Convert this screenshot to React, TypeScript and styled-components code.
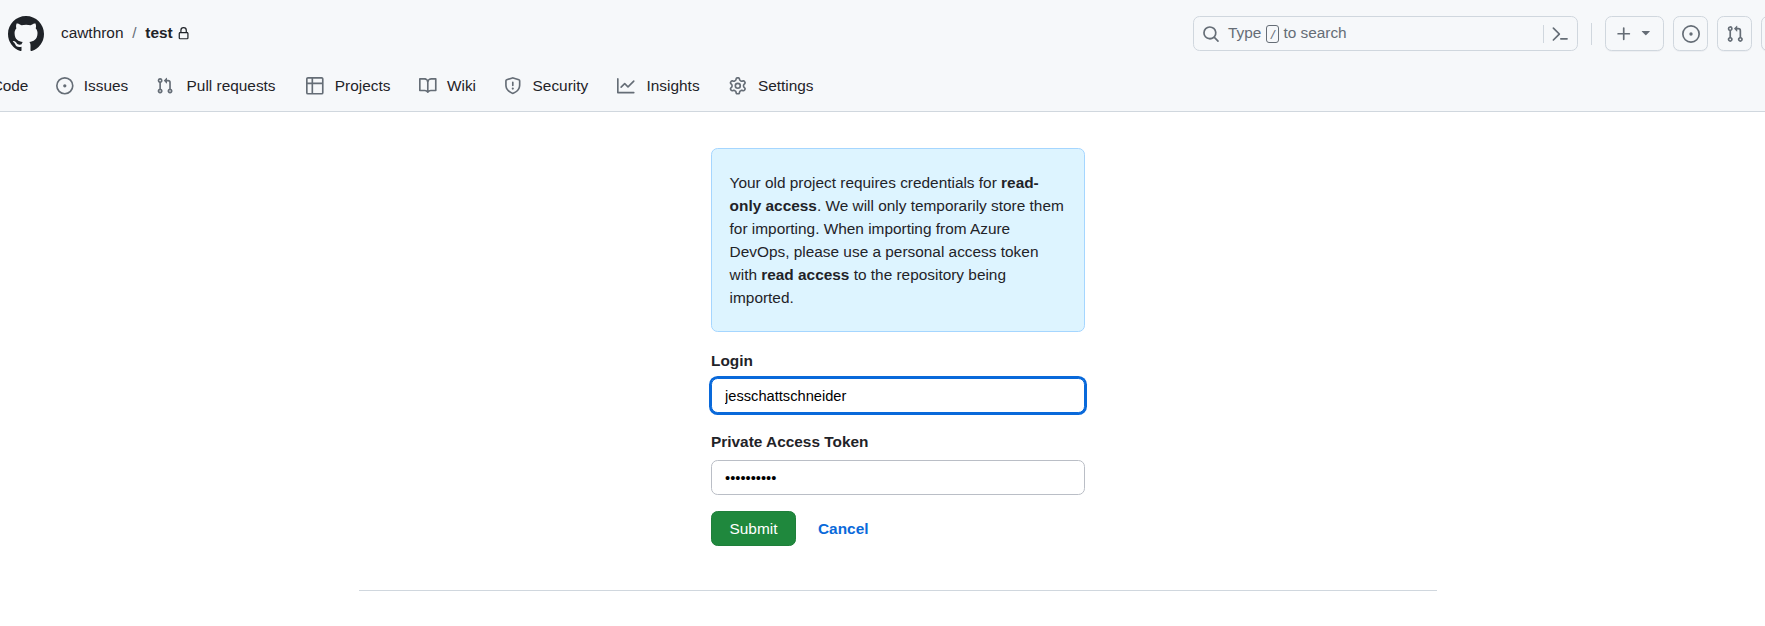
import React from 'react';
import styled, { createGlobalStyle } from 'styled-components';

const Global = createGlobalStyle`
  *, *::before, *::after { box-sizing: border-box; }
  html, body { margin: 0; overflow: hidden; background: #fff; }
  body {
    font-family: "Liberation Sans", Arial, sans-serif;
    font-size: 15.4px;
    line-height: 23.1px;
    color: #1f2328;
  }
`;

const paths = {
  github:
    'M8 0c4.42 0 8 3.58 8 8a8.013 8.013 0 0 1-5.45 7.59c-.4.08-.55-.17-.55-.38 0-.27.01-1.13.01-2.2 0-.75-.25-1.23-.54-1.48 1.78-.2 3.65-.88 3.65-3.95 0-.88-.31-1.59-.82-2.15.08-.2.36-1.02-.08-2.12 0 0-.67-.22-2.2.82-.64-.18-1.32-.27-2-.27-.68 0-1.36.09-2 .27-1.53-1.03-2.2-.82-2.2-.82-.44 1.1-.16 1.92-.08 2.12-.51.56-.82 1.28-.82 2.15 0 3.06 1.86 3.75 3.64 3.95-.23.2-.44.55-.51 1.07-.46.21-1.61.55-2.33-.66-.15-.24-.6-.83-1.23-.82-.67.01-.27.38.01.53.34.19.73.9.82 1.13.16.45.68 1.31 2.69.94 0 .67.01 1.3.01 1.49 0 .21-.15.45-.55.38A7.995 7.995 0 0 1 0 8c0-4.42 3.58-8 8-8Z',
  lock:
    'M4 4a4 4 0 0 1 8 0v2h.25c.966 0 1.75.784 1.75 1.75v5.5A1.75 1.75 0 0 1 12.25 15h-8.5A1.75 1.75 0 0 1 2 13.25v-5.5C2 6.784 2.784 6 3.75 6H4Zm8.25 3.5h-8.5a.25.25 0 0 0-.25.25v5.5c0 .138.112.25.25.25h8.5a.25.25 0 0 0 .25-.25v-5.5a.25.25 0 0 0-.25-.25ZM10.5 6V4a2.5 2.5 0 1 0-5 0v2Z',
  issue:
    'M8 9.5a1.5 1.5 0 1 0 0-3 1.5 1.5 0 0 0 0 3Z M8 0a8 8 0 1 1 0 16A8 8 0 0 1 8 0ZM1.5 8a6.5 6.5 0 1 0 13 0 6.5 6.5 0 0 0-13 0Z',
  pull:
    'M1.5 3.25a2.25 2.25 0 1 1 3 2.122v5.256a2.251 2.251 0 1 1-1.5 0V5.372A2.25 2.25 0 0 1 1.5 3.25Zm5.677-.177L9.573.677A.25.25 0 0 1 10 .854V2.5h1A2.5 2.5 0 0 1 13.5 5v5.628a2.251 2.251 0 1 1-1.5 0V5a1 1 0 0 0-1-1h-1v1.646a.25.25 0 0 1-.427.177L7.177 3.427a.25.25 0 0 1 0-.354ZM3.75 2.5a.75.75 0 1 0 0 1.5.75.75 0 0 0 0-1.5Zm0 9.5a.75.75 0 1 0 0 1.5.75.75 0 0 0 0-1.5Zm8.25.75a.75.75 0 1 0 1.5 0 .75.75 0 0 0-1.5 0Z',
  table:
    'M0 1.75C0 .784.784 0 1.75 0h12.5C15.216 0 16 .784 16 1.75v12.5A1.75 1.75 0 0 1 14.25 16H1.75A1.75 1.75 0 0 1 0 14.25ZM6.5 6.5v8h7.75a.25.25 0 0 0 .25-.25V6.5Zm8-1.5V1.75a.25.25 0 0 0-.25-.25H6.5V5Zm-13 1.5v7.75c0 .138.112.25.25.25H5v-8ZM5 5V1.5H1.75a.25.25 0 0 0-.25.25V5Z',
  book:
    'M0 1.75A.75.75 0 0 1 .75 1h4.253c1.227 0 2.317.59 3 1.501A3.743 3.743 0 0 1 11.006 1h4.245a.75.75 0 0 1 .75.75v10.5a.75.75 0 0 1-.75.75h-4.507a2.25 2.25 0 0 0-1.591.659l-.622.621a.75.75 0 0 1-1.06 0l-.622-.621A2.25 2.25 0 0 0 5.258 13H.75a.75.75 0 0 1-.75-.75Zm7.251 10.324.004-5.073-.002-2.253A2.25 2.25 0 0 0 5.003 2.5H1.5v9h3.757a3.75 3.75 0 0 1 1.994.574ZM8.755 4.75l-.004 7.322a3.752 3.752 0 0 1 1.992-.572H14.5v-9h-3.495a2.25 2.25 0 0 0-2.25 2.25Z',
  shield:
    'M7.467.133a1.748 1.748 0 0 1 1.066 0l5.25 1.68A1.75 1.75 0 0 1 15 3.48V7c0 1.566-.32 3.182-1.303 4.682-.983 1.498-2.585 2.813-5.032 3.855a1.697 1.697 0 0 1-1.33 0c-2.447-1.042-4.049-2.357-5.032-3.855C1.32 10.182 1 8.566 1 7V3.48a1.75 1.75 0 0 1 1.217-1.667Zm.61 1.429a.25.25 0 0 0-.153 0l-5.25 1.68a.25.25 0 0 0-.174.238V7c0 1.358.275 2.666 1.057 3.86.784 1.194 2.121 2.34 4.366 3.297a.196.196 0 0 0 .154 0c2.245-.956 3.582-2.104 4.366-3.298C13.225 9.666 13.5 8.36 13.5 7V3.48a.251.251 0 0 0-.174-.237l-5.25-1.68ZM8.75 4.75v3a.75.75 0 0 1-1.5 0v-3a.75.75 0 0 1 1.5 0ZM9 10.5a1 1 0 1 1-2 0 1 1 0 0 1 2 0Z',
  graph:
    'M1.5 1.75V13.5h13.75a.75.75 0 0 1 0 1.5H.75a.75.75 0 0 1-.75-.75V1.75a.75.75 0 0 1 1.5 0Zm14.28 2.53-5.25 5.25a.75.75 0 0 1-1.06 0L7 7.06 4.28 9.78a.751.751 0 0 1-1.042-.018.751.751 0 0 1-.018-1.042l3.25-3.25a.75.75 0 0 1 1.06 0L10 7.94l4.72-4.72a.751.751 0 0 1 1.042.018.751.751 0 0 1 .018 1.042Z',
  gear:
    'M8 0a8.2 8.2 0 0 1 .701.031C9.444.095 9.99.645 10.16 1.29l.288 1.107c.018.066.079.158.212.224.231.114.454.243.668.386.123.082.233.09.299.071l1.103-.303c.644-.176 1.392.021 1.82.63.27.385.506.792.704 1.218.315.675.111 1.422-.364 1.891l-.814.806c-.049.048-.098.147-.088.294.016.257.016.515 0 .772-.01.147.038.246.088.294l.814.806c.475.469.679 1.216.364 1.891a7.977 7.977 0 0 1-.704 1.217c-.428.61-1.176.807-1.82.63l-1.102-.302c-.067-.019-.177-.011-.3.071a5.909 5.909 0 0 1-.668.386c-.133.066-.194.158-.211.224l-.29 1.106c-.168.646-.715 1.196-1.458 1.26a8.006 8.006 0 0 1-1.402 0c-.743-.064-1.289-.614-1.458-1.26l-.289-1.106c-.018-.066-.079-.158-.212-.224a5.738 5.738 0 0 1-.668-.386c-.123-.082-.233-.09-.299-.071l-1.103.303c-.644.176-1.392-.021-1.82-.63a8.12 8.12 0 0 1-.704-1.218c-.315-.675-.111-1.422.363-1.891l.815-.806c.05-.048.098-.147.088-.294a6.214 6.214 0 0 1 0-.772c.01-.147-.038-.246-.088-.294l-.815-.806C.635 6.045.431 5.298.746 4.623a7.92 7.92 0 0 1 .704-1.217c.428-.61 1.176-.807 1.82-.63l1.102.302c.067.019.177.011.3-.071.214-.143.437-.272.668-.386.133-.066.194-.158.211-.224l.29-1.106C6.009.645 6.556.095 7.299.03 7.53.01 7.764 0 8 0Zm-.571 1.525c-.036.003-.108.036-.137.146l-.289 1.105c-.147.561-.549.967-.998 1.189-.173.086-.34.183-.5.29-.417.278-.97.423-1.529.27l-1.103-.303c-.109-.03-.175.016-.195.045-.22.312-.412.644-.573.99-.014.031-.021.11.059.19l.815.806c.411.406.562.957.53 1.456a4.709 4.709 0 0 0 0 .582c.032.499-.119 1.05-.53 1.456l-.815.806c-.081.08-.073.159-.059.19.162.346.353.677.573.989.02.03.085.076.195.046l1.102-.303c.56-.153 1.113-.008 1.53.27.161.107.328.204.501.29.447.222.85.629.997 1.189l.289 1.105c.029.109.101.143.137.146a6.6 6.6 0 0 0 1.142 0c.036-.003.108-.036.137-.146l.289-1.105c.147-.561.549-.967.998-1.189.173-.086.34-.183.5-.29.417-.278.97-.423 1.529-.27l1.103.303c.109.029.175-.016.195-.045.22-.313.411-.644.573-.99.014-.031.021-.11-.059-.19l-.815-.806c-.411-.406-.562-.957-.53-1.456a4.709 4.709 0 0 0 0-.582c-.032-.499.119-1.05.53-1.456l.815-.806c.081-.08.073-.159.059-.19a6.464 6.464 0 0 0-.573-.989c-.02-.03-.085-.076-.195-.046l-1.102.303c-.56.153-1.113.008-1.53-.27a4.44 4.44 0 0 0-.501-.29c-.447-.222-.85-.629-.997-1.189l-.289-1.105c-.029-.11-.101-.143-.137-.146a6.6 6.6 0 0 0-1.142 0ZM11 8a3 3 0 1 1-6 0 3 3 0 0 1 6 0ZM9.5 8a1.5 1.5 0 1 0-3.001.001A1.5 1.5 0 0 0 9.5 8Z',
  search:
    'M10.68 11.74a6 6 0 0 1-7.922-8.982 6 6 0 0 1 8.982 7.922l3.04 3.04a.749.749 0 0 1-.326 1.275.749.749 0 0 1-.734-.215ZM11.5 7a4.499 4.499 0 1 0-8.997 0A4.499 4.499 0 0 0 11.5 7Z',
  palette:
    'm6.354 8.04-4.773 4.773a.75.75 0 1 0 1.061 1.06L7.945 8.57a.75.75 0 0 0 0-1.06L2.642 2.206a.75.75 0 0 0-1.06 1.061L6.353 8.04ZM8.75 11.5a.75.75 0 0 0 0 1.5h5.5a.75.75 0 0 0 0-1.5h-5.5Z',
  plus:
    'M7.75 2a.75.75 0 0 1 .75.75V7h4.25a.75.75 0 0 1 0 1.5H8.5v4.25a.75.75 0 0 1-1.5 0V8.5H2.75a.75.75 0 0 1 0-1.5H7V2.75A.75.75 0 0 1 7.75 2Z',
  triangle: 'm4.427 5.827 3.396 3.396a.25.25 0 0 0 .354 0l3.396-3.396A.25.25 0 0 0 11.396 5.4H4.604a.25.25 0 0 0-.177.427Z',
};

type IconName = keyof typeof paths;

const Svg = styled.svg<{ $size: number }>`
  display: block;
  flex: none;
  overflow: visible;
  width: ${(p) => p.$size}px;
  height: ${(p) => p.$size}px;
  fill: currentColor;
`;

const Icon = ({ name, size = 17.6 }: { name: IconName; size?: number }) => (
  <Svg $size={size} viewBox="0 0 16 16" aria-hidden="true">
    <path d={paths[name]} />
  </Svg>
);

const Page = styled.div`
  width: 1765px;
  height: 626px;
  overflow: hidden;
`;

const Header = styled.header`
  height: 112px;
  padding-top: 16px;
  background: #f6f8fa;
  border-bottom: 1px solid #d0d7de;
  overflow: hidden;
`;

const TopBar = styled.div`
  display: flex;
  align-items: center;
  height: 35px;
  padding-left: 8px;
`;

const Crumbs = styled.nav`
  display: flex;
  align-items: center;
  margin-left: 17px;
  padding-bottom: 1px;

  svg { margin-top: 1px; }
`;

const Separator = styled.span`
  margin: 0 8.8px;
  color: #656d76;
`;

const RepoName = styled.a`
  margin-right: 4.4px;
  font-weight: 700;
`;

const Tools = styled.div`
  display: flex;
  align-items: center;
  flex: none;
  width: 572px;
  margin-left: auto;
  color: #656d76;
`;

const Search = styled.div`
  display: flex;
  align-items: center;
  flex: none;
  width: 385px;
  height: 35px;
  padding: 0 8px;
  border: 1px solid #d0d7de;
  border-radius: 6.6px;
`;

const Placeholder = styled.span`
  display: flex;
  align-items: center;
  flex: 1;
  margin-left: 8px;
  padding-bottom: 1px;
`;

const Key = styled.kbd`
  display: flex;
  align-items: center;
  justify-content: center;
  width: 13px;
  height: 18px;
  margin: 2px 4px 0 5px;
  border: 1px solid #656d76;
  border-radius: 3px;
  font: italic 13px "Liberation Sans", sans-serif;
`;

const Divider = styled.span<{ $height: number }>`
  flex: none;
  width: 1px;
  height: ${(p) => p.$height}px;
  background: #d0d7de;
`;

const Gap = styled(Divider)`
  margin: 0 4px 0 13px;
`;

const PaletteDivider = styled(Divider)`
  margin-right: 7px;
`;

const ToolButton = styled.button<{ $width?: number }>`
  display: flex;
  align-items: center;
  justify-content: center;
  gap: 4.4px;
  flex: none;
  width: ${(p) => p.$width ?? 35}px;
  height: 35px;
  margin: 0 0 0 9px;
  padding: 0;
  border: 1px solid #d0d7de;
  border-radius: 6.6px;
  box-shadow: 0 1px 0 rgba(31, 35, 40, 0.04);
  background: #f6f8fa;
  color: #656d76;
`;

const Tabs = styled.nav`
  display: flex;
  margin: 17px 0 0 -18px;
`;

const Tab = styled.a`
  display: flex;
  align-items: center;
  gap: 8.8px;
  height: 35px;
  padding: 0 8.8px;
  white-space: nowrap;

  & + & { margin-left: 8.8px; }
  svg { color: #656d76; }
`;

const TabLabel = styled.span`
  text-align: center;

  &::before {
    content: attr(data-content);
    display: block;
    height: 0;
    font-weight: 700;
    visibility: hidden;
  }
`;

const Main = styled.main`
  width: 1078px;
  margin-left: 359px;
  padding: 36px 0 44px;
  border-bottom: 1px solid #d0d7de;
`;

const Form = styled.form`
  width: 374px;
  margin: 0 auto;
`;

const Notice = styled.div`
  height: 184px;
  padding: 22px 17.6px;
  margin-bottom: 17px;
  border: 1px solid #a5d6ff;
  border-radius: 6.6px;
  background: #ddf4ff;
`;

const Label = styled.label<{ $gap: number }>`
  display: block;
  height: 23px;
  margin-bottom: ${(p) => p.$gap}px;
  font-weight: 700;
`;

const Input = styled.input<{ $focused?: boolean }>`
  display: block;
  width: 100%;
  height: 35px;
  margin: 0;
  padding: 0 13px;
  border: 1px solid ${(p) => (p.$focused ? '#0969da' : '#babec6')};
  border-radius: 6.6px;
  box-shadow: ${(p) => (p.$focused ? '0 0 0 2px #0969da' : 'none')};
  background: #fff;
  color: #000;
  font: 14.6667px "Liberation Sans", sans-serif;
  outline: none;
`;

const Field = styled.div`
  & + & { margin-top: 17px; }
`;

const Actions = styled.div`
  display: flex;
  align-items: center;
  margin-top: 16px;
`;

const Submit = styled.button`
  width: 85px;
  height: 35px;
  padding: 0;
  border: 1px solid #1f7f3b;
  border-radius: 6.6px;
  background: #1f883d;
  color: #fff;
  font: 15.4px "Liberation Sans", sans-serif;
`;

const Cancel = styled.a`
  margin-left: 22px;
  color: #0969da;
  font-weight: 700;
`;

const tabs: { label: string; icon?: IconName }[] = [
  { label: 'Code' },
  { label: 'Issues', icon: 'issue' },
  { label: 'Pull requests', icon: 'pull' },
  { label: 'Projects', icon: 'table' },
  { label: 'Wiki', icon: 'book' },
  { label: 'Security', icon: 'shield' },
  { label: 'Insights', icon: 'graph' },
  { label: 'Settings', icon: 'gear' },
];

export default function App() {
  return (
    <>
      <Global />
      <Page>
        <Header>
          <TopBar>
            <Icon name="github" size={36} />
            <Crumbs>
              <a>cawthron</a>
              <Separator>/</Separator>
              <RepoName>test</RepoName>
              <Icon name="lock" size={13.2} />
            </Crumbs>
            <Tools>
              <Search>
                <Icon name="search" size={18} />
                <Placeholder>
                  Type <Key>/</Key> to search
                </Placeholder>
                <PaletteDivider $height={18} />
                <Icon name="palette" size={18} />
              </Search>
              <Gap $height={22} />
              <ToolButton $width={59} aria-label="Create new">
                <Icon name="plus" size={18} />
                <Icon name="triangle" />
              </ToolButton>
              <ToolButton aria-label="Issues">
                <Icon name="issue" size={18} />
              </ToolButton>
              <ToolButton aria-label="Pull requests">
                <Icon name="pull" size={18} />
              </ToolButton>
              <ToolButton aria-label="Notifications" />
            </Tools>
          </TopBar>
          <Tabs>
            {tabs.map((t) => (
              <Tab key={t.label}>
                {t.icon && <Icon name={t.icon} />}
                <TabLabel data-content={t.label}>{t.label}</TabLabel>
              </Tab>
            ))}
          </Tabs>
        </Header>
        <Main>
          <Form>
            <Notice>
              Your old project requires credentials for <b>read-only access</b>. We will only temporarily store them for
              importing. When importing from Azure DevOps, please use a personal access token with <b>read access</b> to
              the repository being imported.
            </Notice>
            <Field>
              <Label htmlFor="login" $gap={6}>Login</Label>
              <Input id="login" $focused defaultValue="jesschattschneider" />
            </Field>
            <Field>
              <Label htmlFor="token" $gap={7}>Private Access Token</Label>
              <Input id="token" type="password" defaultValue="abcdefghij" />
            </Field>
            <Actions>
              <Submit type="button">Submit</Submit>
              <Cancel>Cancel</Cancel>
            </Actions>
          </Form>
        </Main>
      </Page>
    </>
  );
}
